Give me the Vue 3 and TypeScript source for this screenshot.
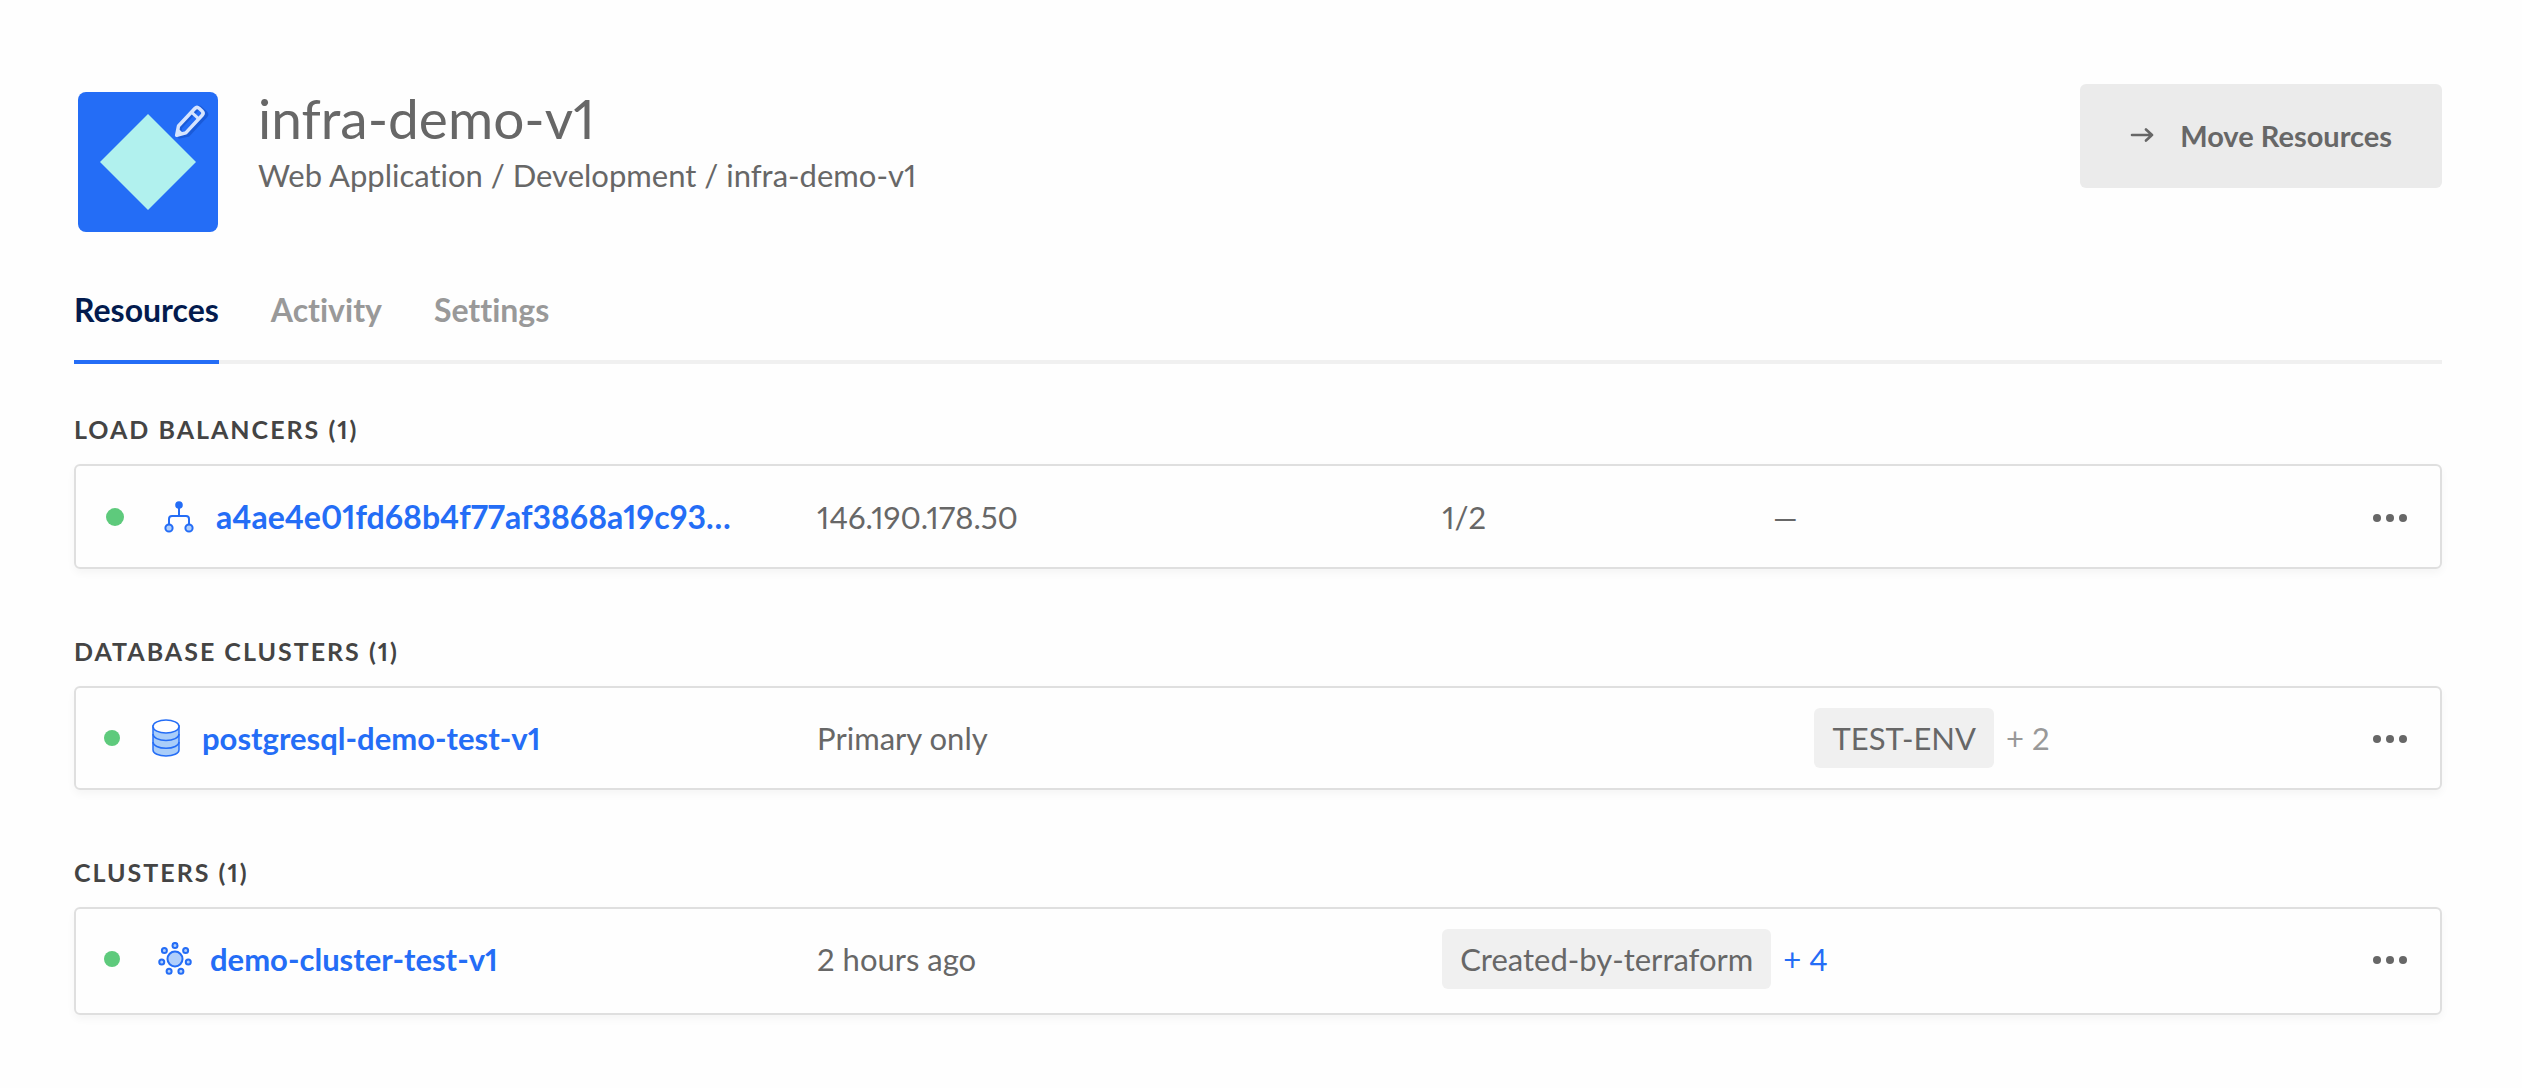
<script setup lang="ts">
interface Resource {
  kind: 'balancer' | 'database' | 'cluster'
  title: string
  name: string
  info: string
  ratio?: string
  note?: string
  tag?: string
  more?: string
}

const tabs: string[] = ['Resources', 'Activity', 'Settings']

const resources: Resource[] = [
  {
    kind: 'balancer',
    title: 'LOAD BALANCERS (1)',
    name: 'a4ae4e01fd68b4f77af3868a19c93…',
    info: '146.190.178.50',
    ratio: '1/2',
    note: '—',
  },
  {
    kind: 'database',
    title: 'DATABASE CLUSTERS (1)',
    name: 'postgresql-demo-test-v1',
    info: 'Primary only',
    tag: 'TEST-ENV',
    more: '+ 2',
  },
  {
    kind: 'cluster',
    title: 'CLUSTERS (1)',
    name: 'demo-cluster-test-v1',
    info: '2 hours ago',
    tag: 'Created-by-terraform',
    more: '+ 4',
  },
]

// Seven satellites spaced evenly around the hub, starting at the top.
const satellites = Array.from({ length: 7 }, (_, i) => {
  const angle = (i * 2 * Math.PI) / 7 - Math.PI / 2
  return { x: 17 + 13.6 * Math.cos(angle), y: 17 + 13.6 * Math.sin(angle) }
})
</script>

<template>
  <main class="page">
    <header class="project">
      <button class="avatar" type="button" aria-label="Edit project icon">
        <svg width="140" height="140" viewBox="0 0 140 140" aria-hidden="true">
          <path d="M70 22 118 70 70 118 22 70Z" fill="#b1f1ee" />
          <g transform="translate(98 44) rotate(-47)" fill="none" stroke-linejoin="round">
            <path d="M2 3 9-3H35Q37-3 37-1V6Q37 8 35 8H9Z" stroke="#0b3fae" stroke-opacity=".4" stroke-width="4" />
            <path d="M1 0 9-5H33Q36-5 36-2V2Q36 5 33 5H9Z" stroke="#d6e4fe" stroke-width="3.500" />
            <path d="M28-5V5" stroke="#d6e4fe" stroke-width="3" />
            <path d="M0 0 7-4V4Z" fill="#d6e4fe" />
          </g>
        </svg>
      </button>
      <div class="heading">
        <h1>infra-demo-v1</h1>
        <p>Web Application / Development / infra-demo-v1</p>
      </div>
      <button class="move" type="button">
        <svg width="24" height="16" viewBox="0 0 24 16" aria-hidden="true">
          <path d="M2 7H22M16 1.500 22 7 16 12.500" fill="none" stroke="currentColor" stroke-width="2.600" stroke-linecap="round" stroke-linejoin="round" />
        </svg>
        Move Resources
      </button>
    </header>

    <nav class="tabs">
      <a v-for="(tab, i) in tabs" :key="tab" href="#" :class="{ active: i === 0 }">{{ tab }}</a>
    </nav>

    <section v-for="r in resources" :key="r.kind" class="group" :class="r.kind">
      <h2 :id="r.kind">{{ r.title }}</h2>
      <div class="card">
        <table :aria-labelledby="r.kind">
          <colgroup>
            <col class="col-name" />
            <col class="col-info" />
            <col v-if="r.kind !== 'cluster'" class="col-ratio" />
            <col />
            <col class="col-menu" />
          </colgroup>
          <tbody>
            <tr>
              <td>
                <div class="name">
                  <span class="status" role="img" aria-label="Active"></span>
                  <svg v-if="r.kind === 'balancer'" class="icon" width="30" height="32" viewBox="0 0 30 32" aria-hidden="true">
                    <g stroke="#246df6" stroke-width="2">
                      <path d="M15 5V15M5 23V18Q5 15 8 15H22Q25 15 25 18V23" fill="none" />
                      <circle cx="15" cy="4" r="2.800" fill="#246df6" />
                      <circle cx="5" cy="27" r="3.600" fill="#b0cffb" />
                      <circle cx="25" cy="27" r="3.600" fill="#b0cffb" />
                    </g>
                  </svg>
                  <svg v-else-if="r.kind === 'database'" class="icon" width="28" height="38" viewBox="0 0 28 38" aria-hidden="true">
                    <g stroke="#246df6" stroke-width="1.500">
                      <path d="M1 7V31C1 34.300 6.800 37 14 37S27 34.300 27 31V7Z" fill="#a9cdf9" />
                      <ellipse cx="14" cy="7.500" rx="13" ry="6.500" fill="#fff" />
                      <path d="M1 15C1 18.600 6.800 21.500 14 21.500S27 18.600 27 15M1 23C1 26.600 6.800 29.300 14 29.300S27 26.600 27 23" fill="none" />
                    </g>
                  </svg>
                  <svg v-else class="icon" width="34" height="34" viewBox="0 0 34 34" aria-hidden="true">
                    <g stroke="#246df6" stroke-width="2" fill="#b0cffb">
                      <circle cx="17" cy="17" r="7.500" />
                      <circle v-for="(s, i) in satellites" :key="i" :cx="s.x" :cy="s.y" r="2.500" />
                    </g>
                  </svg>
                  <a href="#">{{ r.name }}</a>
                </div>
              </td>
              <td>{{ r.info }}</td>
              <td v-if="r.kind !== 'cluster'">{{ r.ratio }}</td>
              <td>
                <div v-if="r.tag" class="tags">
                  <span class="tag">{{ r.tag }}</span>
                  <button class="more" type="button">{{ r.more }}</button>
                </div>
                <template v-else>{{ r.note }}</template>
              </td>
              <td>
                <button class="menu" type="button" aria-label="More actions">
                  <svg width="36" height="10" viewBox="0 0 36 10" aria-hidden="true">
                    <g fill="#676767">
                      <circle cx="5" cy="5" r="4" />
                      <circle cx="18" cy="5" r="4" />
                      <circle cx="31" cy="5" r="4" />
                    </g>
                  </svg>
                </button>
              </td>
            </tr>
          </tbody>
        </table>
      </div>
    </section>
  </main>
</template>

<style>
body {
  margin: 0;
  background: #fefefe;
}
</style>

<style scoped>
.page {
  padding: 84px 80px 70px 74px;
  font-family: Lato, "Open Sans", sans-serif;
  font-size: 31px;
  font-variant-ligatures: none;
  font-variant-numeric: proportional-nums;
  line-height: 40px;
  color: #676767;
}

button {
  border: 0;
  padding: 0;
  background: none;
  font: inherit;
  font-variant-numeric: proportional-nums;
  color: inherit;
  cursor: pointer;
}

a {
  color: inherit;
  text-decoration: none;
}

svg {
  display: block;
  flex: none;
}

h1,
h2,
p {
  margin: 0;
}

.project {
  display: flex;
  align-items: flex-start;
  margin-bottom: 58px;
}

.avatar {
  margin: 8px 40px 0 4px;
  border-radius: 8px;
  background: #246df6;
}

.heading {
  flex: 1;
}

h1 {
  margin-bottom: 3px;
  font-size: 55px;
  font-weight: 400;
  line-height: 68px;
}

.move {
  display: flex;
  align-items: center;
  gap: 26px;
  height: 104px;
  padding: 0 50px;
  border-radius: 6px;
  background: #ebebeb;
  font-size: 29px;
  font-weight: 700;
}

.tabs {
  display: flex;
  gap: 52px;
  border-bottom: 4px solid #f0f0f0;
  margin-bottom: 49px;
  font-size: 32px;
  font-weight: 700;
  color: #999;
}

.tabs a {
  margin-bottom: -4px;
  padding-bottom: 30px;
  border-bottom: 4px solid transparent;
}

.tabs .active {
  border-color: #246df6;
  color: #031b4e;
}

.group + .group {
  margin-top: 66px;
}

h2 {
  margin-bottom: 19px;
  font-size: 25px;
  font-weight: 700;
  line-height: 32px;
  letter-spacing: 2px;
  color: #444;
}

.card {
  border: 2px solid #dfdfdf;
  border-radius: 6px;
  box-shadow: 0 4px 8px rgba(0, 0, 0, 0.04);
}

table {
  width: 100%;
  table-layout: fixed;
  border-collapse: collapse;
}

td {
  height: 60px;
  padding: 20px 0;
}

.balancer td {
  height: 61px;
}

.cluster td {
  padding-bottom: 24px;
}

.col-name {
  width: 31.35%;
}

.col-info {
  width: 26.44%;
}

.balancer .col-ratio {
  width: 14%;
}

.database .col-ratio {
  width: 15.75%;
}

.col-menu {
  width: 68px;
}

.name {
  display: flex;
  align-items: center;
  padding-left: 28px;
  font-weight: 700;
  color: #246df6;
}

.status {
  width: 16px;
  height: 16px;
  border-radius: 50%;
  background: #5eca7c;
}

.icon {
  margin: 0 22px 0 32px;
}

.balancer .name {
  padding-left: 30px;
  font-size: 32px;
}

.balancer .status {
  width: 18px;
  height: 18px;
}

.balancer .icon {
  margin-left: 40px;
}

.cluster .icon {
  margin: 0 18px 0 38px;
}

.tags {
  display: flex;
  align-items: center;
  gap: 12px;
}

.tag {
  padding: 10px 18px;
  border-radius: 6px;
  background: #f0f0f0;
}

.more {
  color: #999;
}

.cluster .more {
  color: #246df6;
}

.menu {
  display: flex;
  padding: 16px 0 14px;
}
</style>
